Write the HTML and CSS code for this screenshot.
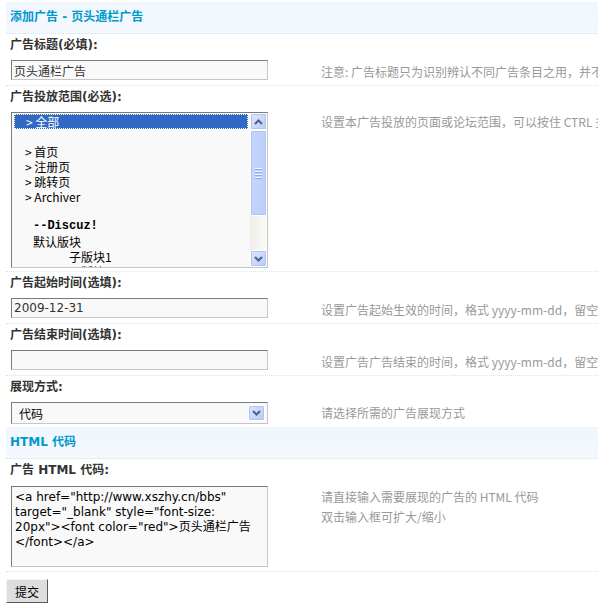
FILE: index.html
```html
<!DOCTYPE html>
<html lang="zh-CN">
<head>
    <meta charset="UTF-8">
    <title>添加广告 - 页头通栏广告</title>
    <link rel="stylesheet" href="styles.css">
</head>
<body>
    <div class="panel">
        <div class="partition">添加广告 - 页头通栏广告</div>

        <div class="label">广告标题(必填):</div>
        <div class="row">
            <div class="field"><input class="txt" type="text" value="页头通栏广告"></div>
            <div class="tips">注意: 广告标题只为识别辨认不同广告条目之用，并不会在广告中显示</div>
        </div>

        <div class="label">广告投放范围(必选):</div>
        <div class="row row-list">
            <div class="field">
                <div class="listbox">
                    <div class="options">
                        <div class="opt selected">&gt; 全部</div>
                        <div class="opt"></div>
                        <div class="opt">&gt; 首页</div>
                        <div class="opt">&gt; 注册页</div>
                        <div class="opt">&gt; 跳转页</div>
                        <div class="opt">&gt; Archiver</div>
                        <div class="opt"></div>
                        <div class="opt group">--Discuz!</div>
                        <div class="opt forum">默认版块</div>
                        <div class="opt sub">子版块1</div>
                        <div class="opt sub">子版块2</div>
                    </div>
                    <div class="scrollbar">
                        <div class="sb-btn">
                            <svg width="9" height="6" viewBox="0 0 9 6"><path d="M1 5 L4.5 1.5 L8 5" fill="none" stroke="#4d6185" stroke-width="2"/></svg>
                        </div>
                        <div class="sb-track">
                            <div class="sb-thumb"><span></span><span></span><span></span><span></span></div>
                        </div>
                        <div class="sb-btn">
                            <svg width="9" height="6" viewBox="0 0 9 6"><path d="M1 1 L4.5 4.5 L8 1" fill="none" stroke="#4d6185" stroke-width="2"/></svg>
                        </div>
                    </div>
                </div>
            </div>
            <div class="tips">设置本广告投放的页面或论坛范围，可以按住 CTRL 多选，选择“全部”为不限制范围</div>
        </div>

        <div class="label">广告起始时间(选填):</div>
        <div class="row">
            <div class="field"><input class="txt" type="text" value="2009-12-31"></div>
            <div class="tips">设置广告起始生效的时间，格式 yyyy-mm-dd，留空为不限制起始时间</div>
        </div>

        <div class="label">广告结束时间(选填):</div>
        <div class="row">
            <div class="field"><input class="txt" type="text" value=""></div>
            <div class="tips">设置广告广告结束的时间，格式 yyyy-mm-dd，留空为不限制结束时间</div>
        </div>

        <div class="label">展现方式:</div>
        <div class="row row-select">
            <div class="field">
                <div class="dropdown">
                    <span>代码</span>
                    <div class="dd-btn">
                        <svg width="9" height="6" viewBox="0 0 9 6"><path d="M1 1 L4.5 4.5 L8 1" fill="none" stroke="#4d6185" stroke-width="2"/></svg>
                    </div>
                </div>
            </div>
            <div class="tips">请选择所需的广告展现方式</div>
        </div>

        <div class="partition">HTML 代码</div>

        <div class="label">广告 HTML 代码:</div>
        <div class="row row-code">
            <div class="field">
                <div class="code">
                    <span>&lt;a href="http://www.xszhy.cn/bbs"</span>
                    <span>target="_blank" style="font-size:</span>
                    <span>20px"&gt;&lt;font color="red"&gt;页头通栏广告</span>
                    <span>&lt;/font&gt;&lt;/a&gt;</span>
                </div>
            </div>
            <div class="tips">请直接输入需要展现的广告的 HTML 代码<br>双击输入框可扩大/缩小</div>
        </div>

        <div class="actions">
            <button class="btn" type="button">提交</button>
        </div>
    </div>
</body>
</html>
```

FILE: styles.css
```css
body {
    margin: 0;
    background: #fff;
    font: 12px "DejaVu Sans", "Noto Sans CJK SC", sans-serif;
    color: #333;
}
.panel {
    width: 592px;
    padding: 2px 0 0 6px;
    overflow: hidden;
}
.partition {
    height: 31px;
    line-height: 31px;
    padding-left: 4px;
    font-weight: bold;
    color: #0099cc;
    background: linear-gradient(#eff6fd, #f4f9fe);
    border-bottom: 1px dotted #cfe6f8;
}
.label {
    height: 22px;
    line-height: 22px;
    padding-left: 4px;
    font-weight: bold;
    color: #333;
}

/* a row holds the control on the left and its hint on the right;
   the control alone sets the row height */
.row {
    display: flex;
    align-items: flex-start;
    border-bottom: 1px dotted #cfe6f8;
}
.field {
    width: 305px;
    flex: none;
    padding: 4px 0 5px 5px;
}
.row-list .field {
    padding-bottom: 3px;
}
.row-select {
    border-bottom: none;
}
.row-select .field {
    padding: 4px 0 3px 5px;
}
.row-code .field {
    padding: 5px 0 4px 5px;
}
.tips {
    padding: 8px 0 0 5px;
    line-height: 16px;
    color: #999;
    white-space: nowrap;
    font-family: "Noto Sans CJK SC", sans-serif;
}
.row-list .tips {
    padding-top: 6px;
}
.row-select .tips {
    padding-top: 7px;
}
.row-code .tips {
    padding-top: 6px;
    line-height: 20px;
}

/* sunken form controls */
.txt,
.listbox,
.dropdown,
.code {
    box-sizing: border-box;
    width: 257px;
    border: 1px solid;
    border-color: #7a7a7a #c6c6c6 #c6c6c6 #7a7a7a;
    background: #f9f9f9;
    color: #333;
}
.txt {
    display: block;
    height: 20px;
    padding: 0 2px;
    margin: 0;
    font: 12px "DejaVu Sans", "Noto Sans CJK SC", sans-serif;
    outline: none;
}

.listbox {
    display: flex;
    height: 156px;
    overflow: hidden;
}
.options {
    flex: 1;
    padding-top: 1px;
    font-family: "Noto Sans CJK SC", sans-serif;
    color: #000;
    overflow: hidden;
}
.opt {
    height: 15px;
    line-height: 15px;
    margin: 0 2px;
    padding-left: 11px;
    white-space: nowrap;
}
.opt.selected {
    box-sizing: border-box;
    background: #316ac5;
    color: #fff;
    border: 1px dotted #fff;
    padding-left: 11px;
    line-height: 13px;
}
.opt.group {
    padding-left: 19px;
    font: bold 12px "Liberation Mono", monospace;
}
.opt.forum {
    padding-left: 19px;
}
.opt.sub {
    padding-left: 55px;
}

/* xp style scrollbar */
.scrollbar {
    width: 17px;
    flex: none;
    display: flex;
    flex-direction: column;
    background: #f4f3ee;
}
.sb-btn {
    box-sizing: border-box;
    height: 17px;
    display: flex;
    align-items: center;
    justify-content: center;
    background: linear-gradient(135deg, #dce6fd, #b9cbf7);
    border: 1px solid #fff;
    border-radius: 2px;
    box-shadow: inset 0 0 0 1px #b0c4f2;
}
.sb-track {
    flex: 1;
    background: linear-gradient(90deg, #efeee8, #fbfbf8);
}
.sb-thumb {
    box-sizing: border-box;
    height: 86px;
    display: flex;
    flex-direction: column;
    align-items: center;
    justify-content: center;
    gap: 1px;
    background: linear-gradient(90deg, #c6d6fc, #bccff9);
    border: 1px solid #fff;
    border-radius: 2px;
    box-shadow: inset 0 0 0 1px #adc2f2;
}
.sb-thumb span {
    width: 7px;
    height: 1px;
    background: #eef3fe;
    border-bottom: 1px solid #8fa8e4;
}

.dropdown {
    height: 22px;
    display: flex;
    align-items: center;
    justify-content: space-between;
    padding: 0 2px 0 7px;
    font-family: "Noto Sans CJK SC", sans-serif;
    color: #000;
}
.dd-btn {
    box-sizing: border-box;
    width: 17px;
    height: 16px;
    display: flex;
    align-items: center;
    justify-content: center;
    background: linear-gradient(135deg, #dce6fd, #b9cbf7);
    border: 1px solid #fff;
    border-radius: 2px;
    box-shadow: inset 0 0 0 1px #b0c4f2;
}

.code {
    height: 81px;
    padding: 3px 3px;
    line-height: 15px;
    color: #000;
}
.code span {
    display: block;
    white-space: nowrap;
}

.actions {
    padding-top: 7px;
}
.btn {
    display: block;
    box-sizing: border-box;
    width: 42px;
    height: 24px;
    margin: 0;
    padding: 0;
    background: #dedede;
    border: 1px solid;
    border-color: #f4f4f4 #5a5a5a #5a5a5a #f4f4f4;
    font: 12px "Noto Sans CJK SC", sans-serif;
    color: #000;
}
```
